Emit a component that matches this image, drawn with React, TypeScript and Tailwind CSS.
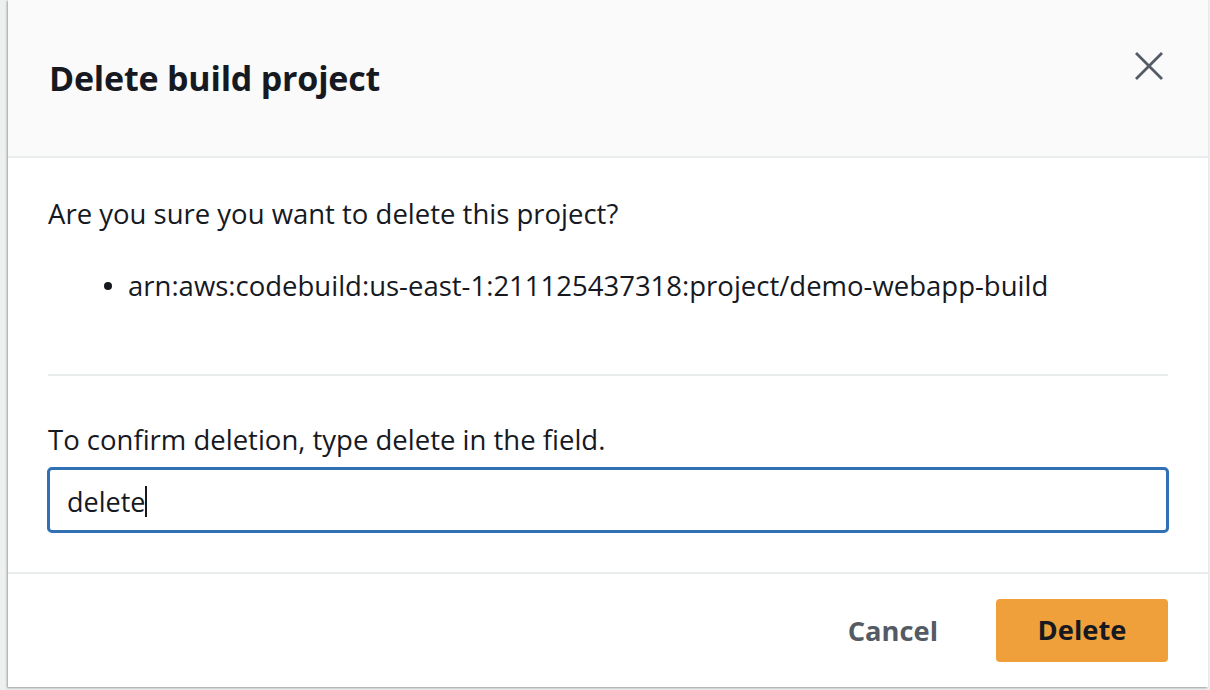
import React from 'react';

const font = { fontFamily: '"Open Sans", "Liberation Sans", sans-serif' };

export default function App() {
  return (
    <div className="w-[1210px] h-[690px] bg-[#eef0f0] pl-[8px] pr-[2px] pb-[3px] overflow-hidden" style={font}>
      <div className="h-full bg-white flex flex-col shadow-[-1px_1px_2px_rgba(0,0,0,0.35)] text-[#16191f]">
        {/* Header */}
        <div className="h-[158px] shrink-0 bg-[#fafafa] border-b-2 border-[#eaeded] flex items-start justify-between pl-[41px] pr-[44px]">
          <h1 className="mt-[56px] text-[34px] font-bold leading-[44px] tracking-[-0.2px]">Delete build project</h1>
          <button className="mt-[51px] w-[30px] h-[30px] flex items-center justify-center text-[#545b64]">
            <svg width="28" height="28" viewBox="0 0 28 28" fill="none" stroke="currentColor" strokeWidth="2.8" strokeLinecap="square">
              <path d="M2 2L26 26M26 2L2 26" />
            </svg>
          </button>
        </div>

        {/* Body */}
        <div className="px-[40px] pt-[40px]">
          <p className="text-[27.5px] leading-[32px]">Are you sure you want to delete this project?</p>
          <div className="mt-[40px] pl-[56px] flex items-center gap-[16px] text-[27.5px] leading-[32px]">
            <span className="w-[8px] h-[8px] rounded-full bg-[#16191f] shrink-0" />
            <span>arn:aws:codebuild:us-east-1:211125437318:project/demo-webapp-build</span>
          </div>
          <div className="mt-[72px] h-[2px] bg-[#eaeded]" />
          <p className="mt-[48px] text-[27.5px] leading-[32px]">To confirm deletion, type delete in the field.</p>
          <div className="mt-[11px] mx-[-1px] h-[66px] border-[3px] border-[#3170b5] rounded-[5px] flex items-center pl-[17px] pt-[3px]">
            <span className="text-[27px] leading-[32px]">delete</span>
            <span className="w-[2px] h-[31px] bg-[#16191f]" />
          </div>
        </div>

        {/* Footer */}
        <div className="mt-[39px] border-t-2 border-[#eaeded] flex justify-end items-center gap-[58px] pr-[40px] pt-[25px]">
          <button className="text-[27.3px] font-bold text-[#545b64] pt-[2px]">Cancel</button>
          <button className="w-[172px] h-[63px] bg-[#f0a03a] rounded-[4px] text-[27.3px] font-bold text-[#16191f]">Delete</button>
        </div>
      </div>
    </div>
  );
}
